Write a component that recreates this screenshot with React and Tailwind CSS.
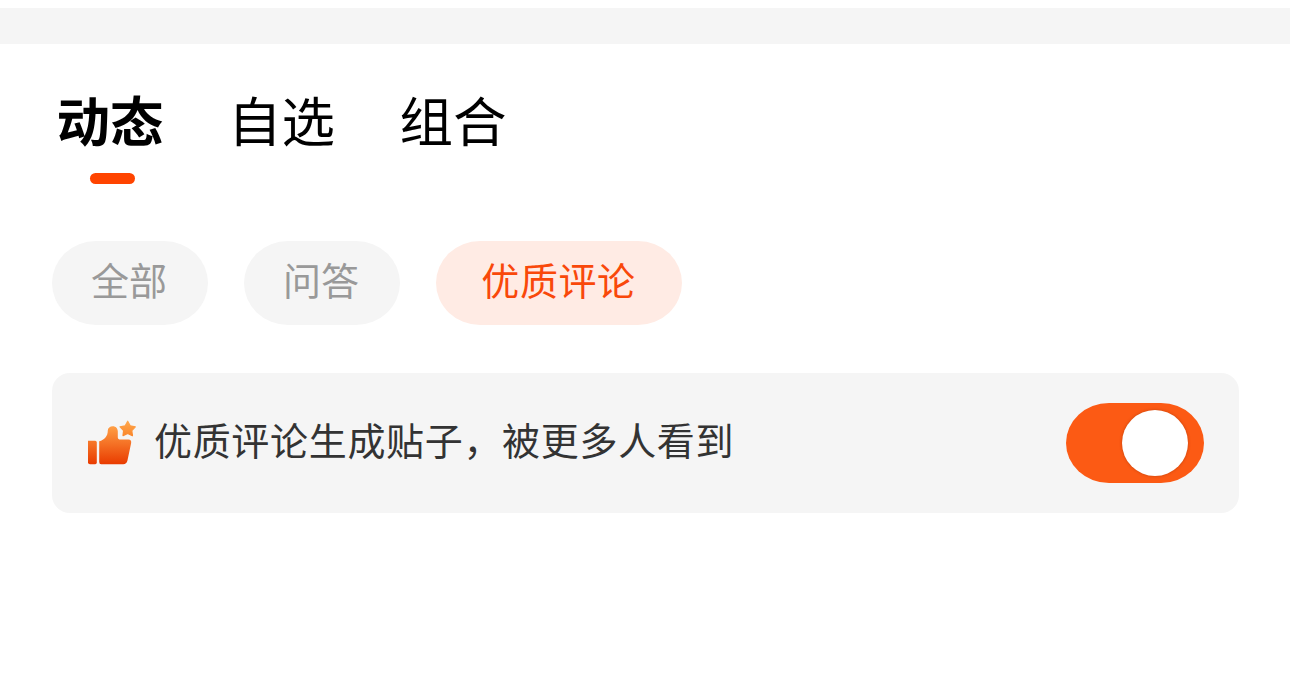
import { useState } from "react";

const tabs = ["动态", "自选", "组合"];
const filters = ["全部", "问答", "优质评论"];

// Thumbs up with a small star
const LikeIcon = () => (
  <svg width="48" height="46" viewBox="0 0 48 46" fill="none" className="block shrink-0">
    <defs>
      <linearGradient id="thumb" x1="0" y1="6" x2="0" y2="44" gradientUnits="userSpaceOnUse">
        <stop stopColor="#ffa046" />
        <stop offset="1" stopColor="#e93c00" />
      </linearGradient>
      <linearGradient id="star" x1="0" y1="0" x2="0" y2="17" gradientUnits="userSpaceOnUse">
        <stop stopColor="#ffaa50" />
        <stop offset="1" stopColor="#fa8428" />
      </linearGradient>
    </defs>
    <path d="M0 20.8H7.2Q8.8 20.8 8.8 22.4V42.4Q8.8 44.2 7.2 44.2H2Q0 44.2 0 42.4Z" fill="url(#thumb)" />
    <path
      d="M11.2 21.2C16.5 20 19.8 16.2 19.8 10.5C19.8 7.8 22 6.2 24.8 6.2C27.8 6.2 29.8 8.4 29.8 11.5V17.6Q29.8 19.4 31.4 19.4H40.5C42.6 19.4 43.6 21.1 43.1 23.3L39.4 40.8C38.8 43.1 37.5 44.2 35.2 44.2H13.2Q11.2 44.2 11.2 42Z"
      fill="url(#thumb)"
    />
    <path
      d="M39.7 1.2L42.2 5.8L47.3 6.8L43.8 10.6L44.4 15.6L39.7 13.5L35 15.6L35.6 10.6L32.1 6.8L37.2 5.8Z"
      fill="url(#star)"
      stroke="url(#star)"
      strokeWidth="1.2"
      strokeLinejoin="round"
    />
  </svg>
);

export default function App() {
  const [activeTab, setActiveTab] = useState("动态");
  const [activeFilter, setActiveFilter] = useState("优质评论");
  const [enabled, setEnabled] = useState(true);

  return (
    <div className="h-[684px] w-[1290px] overflow-hidden bg-white pt-2 font-['Noto_Sans_CJK_SC',sans-serif]">
      <div className="h-9 bg-[#f5f5f5]" />

      {/* Tabs */}
      <div className="flex gap-[63.5px] pl-[56px] pt-[39px]">
        {tabs.map((tab) => (
          <button
            key={tab}
            onClick={() => setActiveTab(tab)}
            className="flex w-[108px] flex-col items-center text-black"
          >
            <span
              className={`whitespace-nowrap text-[53.5px] leading-[72px] ${
                activeTab === tab ? "font-bold" : "font-normal"
              }`}
            >
              {tab}
            </span>
            {activeTab === tab && (
              <span className="mt-[18px] mr-[-5px] h-[11px] w-[45px] rounded-full bg-[#ff4400]" />
            )}
          </button>
        ))}
      </div>

      {/* Filters */}
      <div className="mt-[57px] flex gap-9 pl-[52px]">
        {filters.map((filter) => (
          <button
            key={filter}
            onClick={() => setActiveFilter(filter)}
            className={`h-[83.5px] rounded-[44px/42px] pb-[7px] text-[38px] leading-[76px] ${
              activeFilter === filter
                ? "w-[246px] bg-[#ffebe4] pr-px tracking-[0.6px] text-[#f9480a]"
                : "w-[156px] bg-[#f5f5f5] pr-0.5 text-[#999999]"
            }`}
          >
            {filter}
          </button>
        ))}
      </div>

      {/* Switch row */}
      <div className="ml-[52px] mt-[48.5px] flex h-[140px] w-[1187px] items-center rounded-[18px] bg-[#f5f5f5] pl-9 pr-[35px]">
        <LikeIcon />
        <p className="ml-[18px] whitespace-nowrap pb-[8px] text-[38px] leading-[56px] tracking-[0.68px] text-[#333333]">
          优质评论生成贴子，被更多人看到
        </p>
        <button
          onClick={() => setEnabled(!enabled)}
          className={`ml-auto flex h-20 w-[138px] items-center rounded-[43px/40px] px-4 ${
            enabled ? "justify-end bg-[#fc5a14]" : "justify-start bg-[#cccccc]"
          }`}
        >
          <span className="h-[66px] w-[66px] rounded-full bg-white shadow-[0_0_3px_rgba(120,40,0,0.45)]" />
        </button>
      </div>
    </div>
  );
}
